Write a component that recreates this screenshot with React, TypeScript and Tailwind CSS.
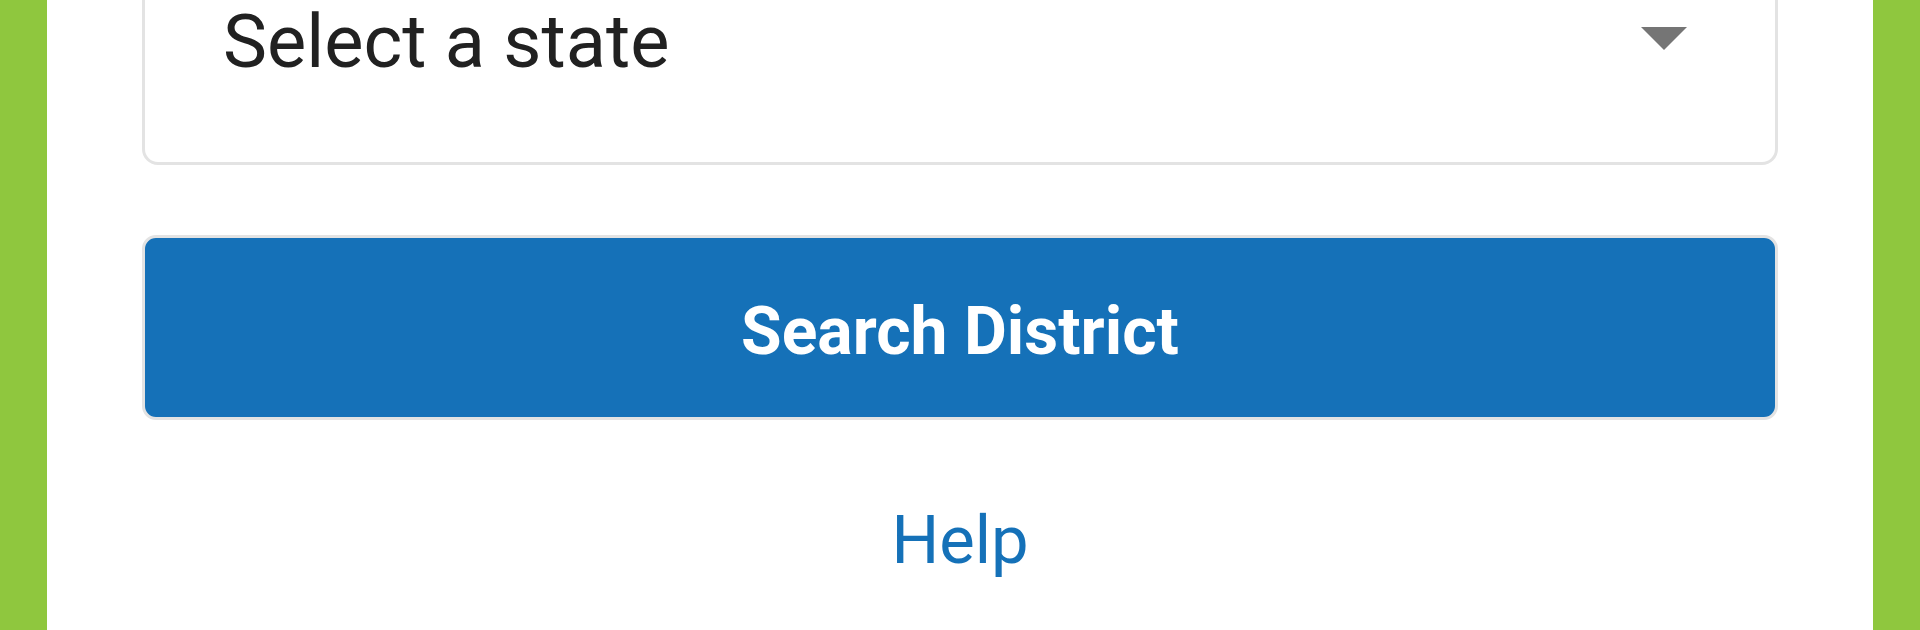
import React from 'react';

const App = () => {
  return (
    <div className="flex h-[630px] w-[1920px] overflow-hidden bg-[#8fc73e] font-['Roboto',sans-serif]">
      <div className="mx-[47px] flex flex-1 flex-col overflow-hidden bg-white px-[95px]">
        <div className="-mt-[91px] flex h-[256px] items-center justify-between rounded-[16px] border-[3px] border-[#e3e3e3] pt-[10px] pl-[78px] pr-[88px]">
          <span className="text-[74px] leading-none text-[#212121]">Select a state</span>
          <svg width="46" height="23" viewBox="0 0 46 23" className="-mt-[8px]">
            <path d="M0 0 H46 L23 23 Z" fill="#757575" />
          </svg>
        </div>
        <button className="mt-[70px] flex h-[185px] items-center justify-center rounded-[14px] border-[3px] border-[#e3e3e3] bg-[#1571b8] pt-[8px] text-[66px] font-bold text-white">
          Search District
        </button>
        <div className="mt-[87px] text-center text-[67px] leading-none text-[#1571b8]">Help</div>
      </div>
    </div>
  );
};

export default App;
